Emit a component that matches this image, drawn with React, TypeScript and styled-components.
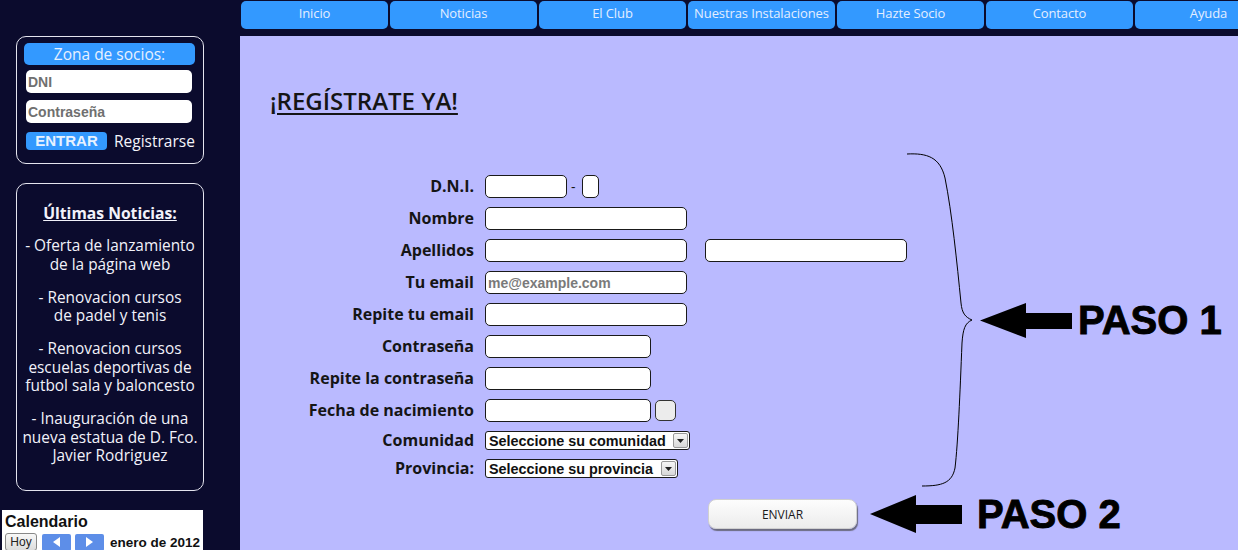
import React from "react";
import styled, { createGlobalStyle } from "styled-components";

const Global = createGlobalStyle`
  html, body { margin: 0; padding: 0; }
  body {
    background: #0b0b2d;
    width: 1238px;
    height: 550px;
    overflow: hidden;
  }
  * { box-sizing: border-box; }
`;

const HUM = `"Open Sans", "Noto Sans", sans-serif`;
const ARIAL = `"Liberation Sans", Arial, sans-serif`;

const Page = styled.div`
  display: grid;
  grid-template-columns: 240px 998px;
  height: 550px;
  overflow: hidden;
`;

const Sidebar = styled.aside`
  display: flex;
  flex-direction: column;
  align-items: flex-start;
  padding-top: 36px;
  gap: 19px;
`;

const SideBox = styled.div<{ $h: number }>`
  margin-left: 16px;
  width: 188px;
  height: ${(p) => p.$h}px;
  border: 1px solid #e4e4ee;
  border-radius: 10px;
  color: #f2f2fa;
  font-family: ${HUM};
`;

const LoginBox = styled(SideBox)`
  display: flex;
  flex-direction: column;
  padding: 6px 8px 0 7px;
`;

const ZoneHeader = styled.div`
  height: 22px;
  background: #3399ff;
  border-radius: 5px;
  text-align: center;
  font-size: 15.5px;
  line-height: 22px;
  color: #e6f0ff;
`;

const SideInput = styled.input`
  margin: 5px 0 0 2px;
  width: 166px;
  height: 23px;
  border: none;
  border-radius: 5px;
  background: #fff;
  padding: 0 2px;
  font-family: ${ARIAL};
  font-weight: bold;
  font-size: 14px;
  color: #555;
  & + & { margin-top: 7px; }
  &::placeholder { color: #707070; }
`;

const LoginRow = styled.div`
  display: flex;
  align-items: center;
  margin: 9px 0 0 2px;
  gap: 7px;
`;

const EnterButton = styled.button`
  width: 81px;
  height: 18px;
  border: none;
  border-radius: 4px;
  background: #3399ff;
  color: #e8f2ff;
  font-family: ${ARIAL};
  font-weight: bold;
  font-size: 15px;
  line-height: 18px;
  padding: 0;
`;

const RegisterLink = styled.span`
  font-size: 15.5px;
  line-height: 18px;
  color: #f4f4fa;
  white-space: nowrap;
`;

const NewsBox = styled(SideBox)`
  padding: 20px 2px 0;
  text-align: center;
`;

const NewsTitle = styled.div`
  font-weight: bold;
  font-size: 15.7px;
  line-height: 19px;
  text-decoration: underline;
  margin-bottom: 14px;
`;

const NewsItem = styled.p`
  margin: 0 0 14.5px;
  font-size: 15.4px;
  line-height: 18.5px;
  white-space: nowrap;
`;

const Calendar = styled.div`
  margin-left: 2px;
  width: 201px;
  flex: 1;
  background: #fff;
  padding: 2px 3px 0;
  font-family: ${ARIAL};
  color: #111;
`;

const CalTitle = styled.div`
  font-weight: bold;
  font-size: 16px;
  line-height: 19px;
`;

const CalRow = styled.div`
  display: flex;
  align-items: center;
  gap: 4px;
  margin-top: 2px;
  white-space: nowrap;
`;

const TodayButton = styled.button`
  flex: none;
  height: 18px;
  width: 32px;
  padding: 0;
  border: 1px solid #888;
  border-radius: 3px;
  background: linear-gradient(#f8f8f8, #dcdcdc);
  font-family: ${ARIAL};
  font-size: 12px;
  line-height: 16px;
  color: #222;
  margin-right: 1px;
`;

const NavArrow = styled.button`
  flex: none;
  width: 29px;
  height: 17px;
  padding: 0;
  border: none;
  border-radius: 2px;
  background: #5d8ee8;
  display: flex;
  align-items: center;
  justify-content: center;
`;

const MonthLabel = styled.span`
  font-weight: bold;
  font-size: 13.5px;
  margin-left: 2px;
`;

const MainCol = styled.div`
  display: flex;
  flex-direction: column;
  height: 550px;
`;

const Nav = styled.nav`
  display: flex;
  gap: 2px;
  height: 36px;
  padding: 1px 0 0 1px;
  overflow: hidden;
`;

const NavButton = styled.div`
  flex: 0 0 147px;
  height: 28px;
  background: #3399ff;
  border-radius: 5px;
  color: #e4eeff;
  font-family: ${HUM};
  font-size: 13px;
  line-height: 25px;
  text-align: center;
  white-space: nowrap;
  letter-spacing: -0.1px;
`;

const Content = styled.main`
  flex: 1;
  background: #babaff;
  padding: 51px 0 0 30px;
  color: #151515;
`;

const Title = styled.h1`
  margin: 0;
  font-family: ${HUM};
  font-size: 24px;
  font-weight: 600;
  line-height: 28px;
  text-decoration: underline;
  text-decoration-thickness: 2px;
  text-underline-offset: 3px;
`;

const StepRow = styled.div<{ $mt: number }>`
  display: flex;
  align-items: center;
  margin-top: ${(p) => p.$mt}px;
`;

const Form = styled.form`
  display: flex;
  flex-direction: column;
  gap: 9px;
  padding: 22px 0 9px;
  width: 637px;
`;

const Row = styled.div<{ $h: number }>`
  display: flex;
  align-items: center;
  height: ${(p) => p.$h}px;
`;

const Label = styled.label`
  width: 204px;
  margin-right: 11px;
  margin-top: -2px;
  text-align: right;
  font-family: ${HUM};
  font-weight: bold;
  font-size: 16px;
  color: #151515;
  white-space: nowrap;
`;

const TextInput = styled.input<{ $w: number }>`
  width: ${(p) => p.$w}px;
  height: 23px;
  border: 1px solid #1a1a1a;
  border-radius: 5px;
  background: #fff;
  padding: 0 2px;
  font-family: ${ARIAL};
  font-weight: bold;
  font-size: 14px;
  &::placeholder { color: #7a7a7a; }
`;

const Dash = styled.span`
  margin: 0 6px 0 4px;
  font-family: ${HUM};
  font-size: 14px;
`;

const CalendarPick = styled.button`
  margin-left: 4px;
  width: 21px;
  height: 21px;
  padding: 0;
  border: 1px solid #333;
  border-radius: 5px;
  background: #ececec;
`;

const SelectBox = styled.div<{ $w: number }>`
  display: flex;
  width: ${(p) => p.$w}px;
  height: 19px;
  border: 1px solid #1a1a1a;
  border-radius: 3px;
  background: #fff;
  overflow: hidden;
`;

const Select = styled.select`
  flex: 1;
  min-width: 0;
  appearance: none;
  border: none;
  background: transparent;
  padding: 0 3px;
  font-family: ${ARIAL};
  font-weight: bold;
  font-size: 14.4px;
  color: #111;
  outline: none;
`;

const SelectArrow = styled.div`
  flex: none;
  width: 15px;
  margin: 1px;
  border: 1px solid #999;
  border-radius: 2px;
  background: linear-gradient(#f6f6f6, #d8d8d8);
  display: flex;
  align-items: center;
  justify-content: center;
`;

const SendButton = styled.button`
  margin-left: 438px;
  width: 149px;
  height: 30px;
  border: 1px solid #d0d0d0;
  border-radius: 8px;
  background: linear-gradient(#fdfdfd, #ececec);
  box-shadow: 1px 2px 1px #6b6b80;
  font-family: ${HUM};
  font-size: 12px;
  color: #1a1a1a;
  padding: 0;
`;

const StepText = styled.span<{ $ml: number }>`
  margin-left: ${(p) => p.$ml}px;
  font-family: ${ARIAL};
  font-weight: bold;
  font-size: 40px;
  line-height: 40px;
  color: #000;
  -webkit-text-stroke: 0.9px #000;
  white-space: nowrap;
`;

const Brace = () => (
  <svg width="68" height="334" viewBox="0 0 68 334" style={{ flex: "none" }}>
    <path
      d="M0,1 C20,0 33,4 38,25 C45,60 50,110 54,150 C55,160 58,164 65,167 C58,170 56,176 55,190 C53,240 51,290 48,315 C45,330 35,333 15,333"
      fill="none"
      stroke="#000"
      strokeWidth="1"
    />
  </svg>
);

const Arrow = ({ h, ml, shaft }: { h: number; ml: number; shaft: [number, number] }) => (
  <svg width="92" height={h} viewBox={`0 0 92 ${h}`} style={{ flex: "none", marginLeft: ml }}>
    <polygon
      points={`0,${h / 2} 46,0 46,${shaft[0]} 92,${shaft[0]} 92,${shaft[1]} 46,${shaft[1]} 46,${h}`}
      fill="#000"
    />
  </svg>
);

const Tri = ({ dir }: { dir: "l" | "r" }) => (
  <svg width="7" height="10" viewBox="0 0 7 10">
    <polygon points={dir === "l" ? "7,0 0,5 7,10" : "0,0 7,5 0,10"} fill="#fff" />
  </svg>
);

const DownTri = () => (
  <svg width="7" height="4" viewBox="0 0 7 4">
    <polygon points="0,0 7,0 3.5,4" fill="#222" />
  </svg>
);

const navItems = ["Inicio", "Noticias", "El Club", "Nuestras Instalaciones", "Hazte Socio", "Contacto", "Ayuda"];

const news = [
  ["- Oferta de lanzamiento", "de la página web"],
  ["- Renovacion cursos", "de padel y tenis"],
  ["- Renovacion cursos", "escuelas deportivas de", "futbol sala y baloncesto"],
  ["- Inauguración de una", "nueva estatua de D. Fco.", "Javier Rodriguez"],
];

export default function App() {
  return (
    <>
      <Global />
      <Page>
        <Sidebar>
          <LoginBox $h={128}>
            <ZoneHeader>Zona de socios:</ZoneHeader>
            <SideInput placeholder="DNI" />
            <SideInput placeholder="Contraseña" type="password" />
            <LoginRow>
              <EnterButton>ENTRAR</EnterButton>
              <RegisterLink>Registrarse</RegisterLink>
            </LoginRow>
          </LoginBox>
          <NewsBox $h={308}>
            <NewsTitle>Últimas Noticias:</NewsTitle>
            {news.map((lines, i) => (
              <NewsItem key={i}>
                {lines.map((l, j) => (
                  <React.Fragment key={j}>
                    {l}
                    {j < lines.length - 1 && <br />}
                  </React.Fragment>
                ))}
              </NewsItem>
            ))}
          </NewsBox>
          <Calendar>
            <CalTitle>Calendario</CalTitle>
            <CalRow>
              <TodayButton>Hoy</TodayButton>
              <NavArrow><Tri dir="l" /></NavArrow>
              <NavArrow><Tri dir="r" /></NavArrow>
              <MonthLabel>enero de 2012</MonthLabel>
            </CalRow>
          </Calendar>
        </Sidebar>
        <MainCol>
          <Nav>
            {navItems.map((n) => (
              <NavButton key={n}>{n}</NavButton>
            ))}
          </Nav>
          <Content>
            <Title>¡REGÍSTRATE YA!</Title>
            <StepRow $mt={38}>
              <Form onSubmit={(e) => e.preventDefault()}>
                <Row $h={23}>
                  <Label>D.N.I.</Label>
                  <TextInput $w={82} />
                  <Dash>-</Dash>
                  <TextInput $w={17} />
                </Row>
                <Row $h={23}>
                  <Label>Nombre</Label>
                  <TextInput $w={202} />
                </Row>
                <Row $h={23}>
                  <Label>Apellidos</Label>
                  <TextInput $w={202} />
                  <TextInput $w={202} style={{ marginLeft: 18 }} />
                </Row>
                <Row $h={23}>
                  <Label>Tu email</Label>
                  <TextInput $w={202} placeholder="me@example.com" />
                </Row>
                <Row $h={23}>
                  <Label>Repite tu email</Label>
                  <TextInput $w={202} />
                </Row>
                <Row $h={23}>
                  <Label>Contraseña</Label>
                  <TextInput $w={166} type="password" />
                </Row>
                <Row $h={23}>
                  <Label>Repite la contraseña</Label>
                  <TextInput $w={166} type="password" />
                </Row>
                <Row $h={23}>
                  <Label>Fecha de nacimiento</Label>
                  <TextInput $w={166} />
                  <CalendarPick type="button" />
                </Row>
                <Row $h={19}>
                  <Label>Comunidad</Label>
                  <SelectBox $w={205}>
                    <Select><option>Seleccione su comunidad</option></Select>
                    <SelectArrow><DownTri /></SelectArrow>
                  </SelectBox>
                </Row>
                <Row $h={19}>
                  <Label>Provincia:</Label>
                  <SelectBox $w={193}>
                    <Select><option>Seleccione su provincia</option></Select>
                    <SelectArrow><DownTri /></SelectArrow>
                  </SelectBox>
                </Row>
              </Form>
              <Brace />
              <Arrow h={35} ml={5} shaft={[10, 26]} />
              <StepText $ml={6}>PASO 1</StepText>
            </StepRow>
            <StepRow $mt={7}>
              <SendButton type="button">ENVIAR</SendButton>
              <Arrow h={38} ml={13} shaft={[10, 29]} />
              <StepText $ml={15}>PASO 2</StepText>
            </StepRow>
          </Content>
        </MainCol>
      </Page>
    </>
  );
}
